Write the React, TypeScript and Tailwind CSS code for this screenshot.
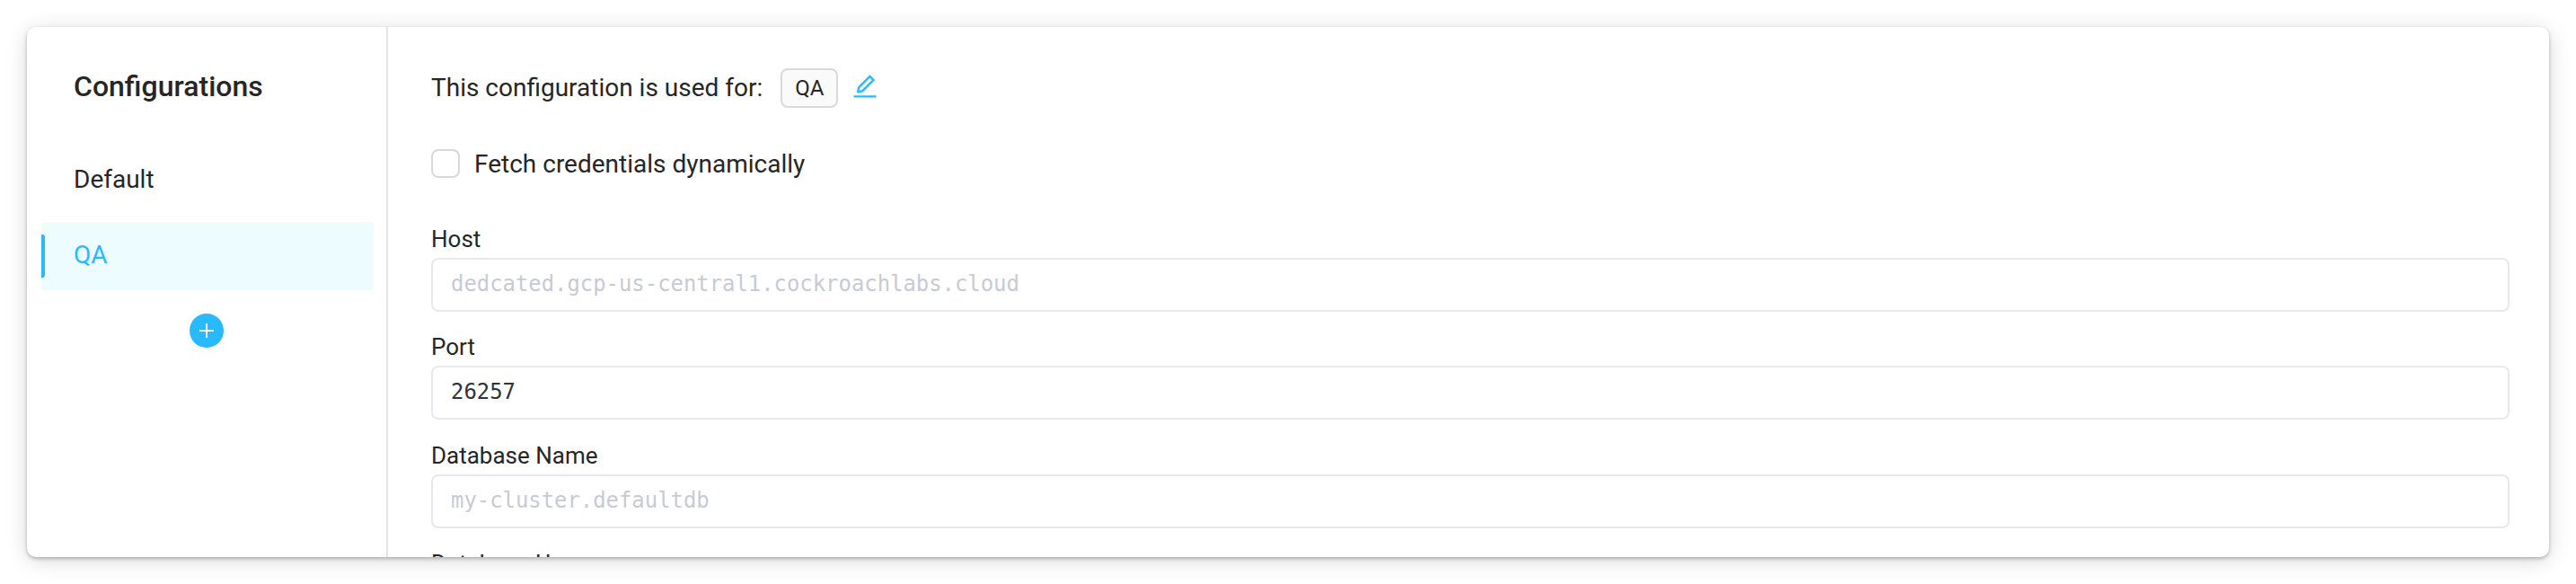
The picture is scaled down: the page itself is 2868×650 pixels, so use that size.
import { useState } from "react"
import { AiOutlineEdit } from "react-icons/ai"

const CONFIGURATIONS = ["Default", "QA"]

const FIELDS = [
  { label: "Host", placeholder: "dedcated.gcp-us-central1.cockroachlabs.cloud", value: "" },
  { label: "Port", placeholder: "", value: "26257" },
  { label: "Database Name", placeholder: "my-cluster.defaultdb", value: "" },
  { label: "Database User", placeholder: "", value: "" },
]

function Sidebar({ selected, onSelect }: { selected: string; onSelect: (name: string) => void }) {
  return (
    <aside className="w-[402px] shrink-0 border-r-2 border-[#e4e4e4] pl-4 pr-[14px]">
      <h2 className="mt-[42px] pl-[36px] text-[32px] leading-[48px] font-medium">Configurations</h2>

      <nav className="mt-[43px] flex flex-col gap-2">
        {CONFIGURATIONS.map((name) => {
          const active = name === selected
          return (
            <button
              key={name}
              onClick={() => onSelect(name)}
              className={`flex h-[76px] w-full items-center rounded-[4px] text-left text-[28px] ${
                active ? "bg-[#edfcff] text-[#29b9ff]" : ""
              }`}
            >
              <span className={`h-12 w-1 rounded-r-[3px] ${active ? "bg-[#29b9ff]" : ""}`} />
              <span className="pb-0.5 pl-8">{name}</span>
            </button>
          )
        })}
      </nav>

      {/* Add configuration */}
      <button
        aria-label="Add configuration"
        className="mt-[26px] ml-[165px] flex h-[38px] w-[38px] items-center justify-center rounded-full bg-[#29b9ff]"
      >
        <svg viewBox="0 0 16 16" className="h-4 w-4 fill-white">
          <path d="M7 0h2v7h7v2H9v7H7V9H0V7h7z" />
        </svg>
      </button>
    </aside>
  )
}

function Field({ label, placeholder, value }: { label: string; placeholder: string; value: string }) {
  return (
    <label className="block h-[120.4px] shrink-0">
      <span className="block h-[38px] text-[26px] leading-[40px]">{label}</span>
      <input
        defaultValue={value}
        placeholder={placeholder}
        className="mt-[3px] block h-[60px] w-full rounded-[8px] border-2 border-[#e8e8ee] px-5 pb-0.5 font-['DejaVu_Sans_Mono',monospace] text-[23.9px] text-[#2d3538] outline-none placeholder:text-[#c7cad4]"
      />
    </label>
  )
}

export default function App() {
  const [selected, setSelected] = useState("QA")

  return (
    <div className="h-[650px] overflow-hidden bg-white p-[30px] font-[Roboto,sans-serif] text-[#262626]">
      <div className="flex h-[590px] overflow-hidden rounded-[10px] bg-white shadow-[0_2px_4px_rgba(0,0,0,0.25),0_4px_24px_rgba(0,0,0,0.15)]">
        <Sidebar selected={selected} onSelect={setSelected} />

        <main className="flex flex-1 flex-col pr-11 pl-12">
          <div className="mt-[46px] flex h-11 shrink-0 items-center text-[28px]">
            <span>This configuration is used for:</span>
            <span className="ml-5 flex h-11 items-center rounded-[8px] border-2 border-[#d9d9d9] bg-[#fafafa] px-[14px] text-[24px]">
              {selected}
            </span>
            <button aria-label="Edit" className="-mt-1 ml-[14px] text-[#29b9ff]">
              <AiOutlineEdit className="h-8 w-8" />
            </button>
          </div>

          <label className="mt-[42px] flex h-10 shrink-0 items-center text-[28px]">
            <input
              type="checkbox"
              className="h-8 w-8 appearance-none rounded-[8px] border-2 border-[#d9d9d9] bg-white"
            />
            <span className="ml-4 pt-0.5">Fetch credentials dynamically</span>
          </label>

          <div className="mt-[44px] flex flex-col">
            {FIELDS.map((field) => (
              <Field key={field.label} {...field} />
            ))}
          </div>
        </main>
      </div>
    </div>
  )
}
